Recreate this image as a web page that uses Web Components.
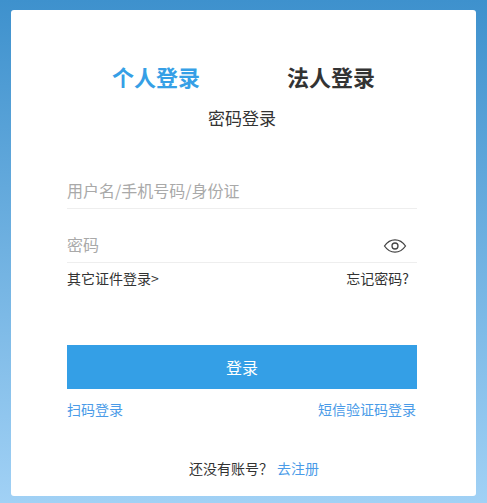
<!DOCTYPE html>
<html lang="zh">
<head>
<meta charset="utf-8">
<title>登录</title>
<style>
html, body { margin: 0; height: 100%; }
body { font-family: "Noto Sans CJK SC", "Liberation Sans", sans-serif; }
</style>
</head>
<body>
<login-page>
	<login-card>
		<login-tabs>
			<span slot="active">个人登录</span>
			<span slot="other">法人登录</span>
			<span slot="sub">密码登录</span>
		</login-tabs>
		<login-field placeholder="用户名/手机号码/身份证"></login-field>
		<login-field placeholder="密码" eye></login-field>
		<login-row class="extra" left="其它证件登录&gt;" right="忘记密码?" tone="dark"></login-row>
		<login-button>登录</login-button>
		<login-row class="alt" left="扫码登录" right="短信验证码登录" tone="blue"></login-row>
		<login-signup></login-signup>
	</login-card>
</login-page>

<script>
class LoginPage extends HTMLElement {
	constructor() {
		super();
		this.attachShadow({ mode: 'open' });
		this.shadowRoot.innerHTML = `
			<style>
			:host {
				display: block;
				width: 487px;
				height: 503px;
				box-sizing: border-box;
				padding: 10px 11px 7px 11px;
				background: linear-gradient(180deg, #3e91cd 0%, #a1d1f5 100%);
			}
			</style>
			<slot></slot>
		`;
	}
}

class LoginCard extends HTMLElement {
	constructor() {
		super();
		this.attachShadow({ mode: 'open' });
		this.shadowRoot.innerHTML = `
			<style>
			:host {
				display: block;
				height: 486px;
				box-sizing: border-box;
				padding: 48px 59px 0 56px;
				background: #fff;
				border-radius: 3px;
			}
			</style>
			<slot></slot>
		`;
	}
}

class LoginTabs extends HTMLElement {
	constructor() {
		super();
		this.attachShadow({ mode: 'open' });
		this.shadowRoot.innerHTML = `
			<style>
			:host {
				display: block;
				text-align: center;
				margin-bottom: 42px;
			}
			.tabs {
				display: flex;
				justify-content: center;
				gap: 87px;
				padding-left: 3px;
				font-size: 22px;
				font-weight: 700;
				line-height: 36px;
				color: #333;
			}
			.active { color: #369fe6; }
			.sub {
				margin-top: 12px;
				font-size: 17px;
				line-height: 24px;
				color: #333;
			}
			</style>
			<div class="tabs">
				<div class="active"><slot name="active"></slot></div>
				<div><slot name="other"></slot></div>
			</div>
			<div class="sub"><slot name="sub"></slot></div>
		`;
	}
}

class LoginField extends HTMLElement {
	constructor() {
		super();
		this.attachShadow({ mode: 'open' });
		const eye = this.hasAttribute('eye') ? `
			<svg width="24" height="16" viewBox="0 0 24 16" fill="none" stroke="#444" stroke-width="1.3">
				<path d="M1.5 8C4.5 3.6 8 1.8 12 1.8S19.5 3.6 22.5 8C19.5 12.4 16 14.2 12 14.2S4.5 12.4 1.5 8Z"/>
				<circle cx="12" cy="8" r="3"/>
			</svg>` : '';
		this.shadowRoot.innerHTML = `
			<style>
			:host {
				display: flex;
				align-items: center;
				justify-content: space-between;
				height: 36px;
				padding-right: 10px;
				margin-bottom: 17px;
				border-bottom: 1px solid #eee;
				font-size: 16px;
				color: #a9a9a9;
			}
			svg { margin-top: 3px; }
			</style>
			<span>${this.getAttribute('placeholder')}</span>
			${eye}
		`;
	}
}

class LoginRow extends HTMLElement {
	constructor() {
		super();
		this.attachShadow({ mode: 'open' });
		const blue = this.getAttribute('tone') === 'blue';
		this.shadowRoot.innerHTML = `
			<style>
			:host {
				display: flex;
				justify-content: space-between;
				font-size: 14px;
				line-height: 20px;
				color: ${blue ? '#4a9be8' : '#333'};
				padding-right: ${blue ? 1 : 8}px;
				margin-top: ${blue ? 10 : -12}px;
			}
			</style>
			<span>${this.getAttribute('left')}</span>
			<span>${this.getAttribute('right')}</span>
		`;
	}
}

class LoginButton extends HTMLElement {
	constructor() {
		super();
		this.attachShadow({ mode: 'open' });
		this.shadowRoot.innerHTML = `
			<style>
			:host {
				display: flex;
				align-items: center;
				justify-content: center;
				height: 44px;
				margin-top: 57px;
				background: #349fe6;
				color: #fff;
				font-size: 16px;
			}
			</style>
			<slot></slot>
		`;
	}
}

class LoginSignup extends HTMLElement {
	constructor() {
		super();
		this.attachShadow({ mode: 'open' });
		this.shadowRoot.innerHTML = `
			<style>
			:host {
				display: flex;
				justify-content: center;
				gap: 4px;
				padding-left: 24px;
				margin-top: 39px;
				font-size: 14px;
				line-height: 20px;
				color: #333;
			}
			.go { color: #4a9be8; }
			</style>
			<span>还没有账号？</span>
			<span class="go">去注册</span>
		`;
	}
}

customElements.define('login-page', LoginPage);
customElements.define('login-card', LoginCard);
customElements.define('login-tabs', LoginTabs);
customElements.define('login-field', LoginField);
customElements.define('login-row', LoginRow);
customElements.define('login-button', LoginButton);
customElements.define('login-signup', LoginSignup);
</script>
</body>
</html>
